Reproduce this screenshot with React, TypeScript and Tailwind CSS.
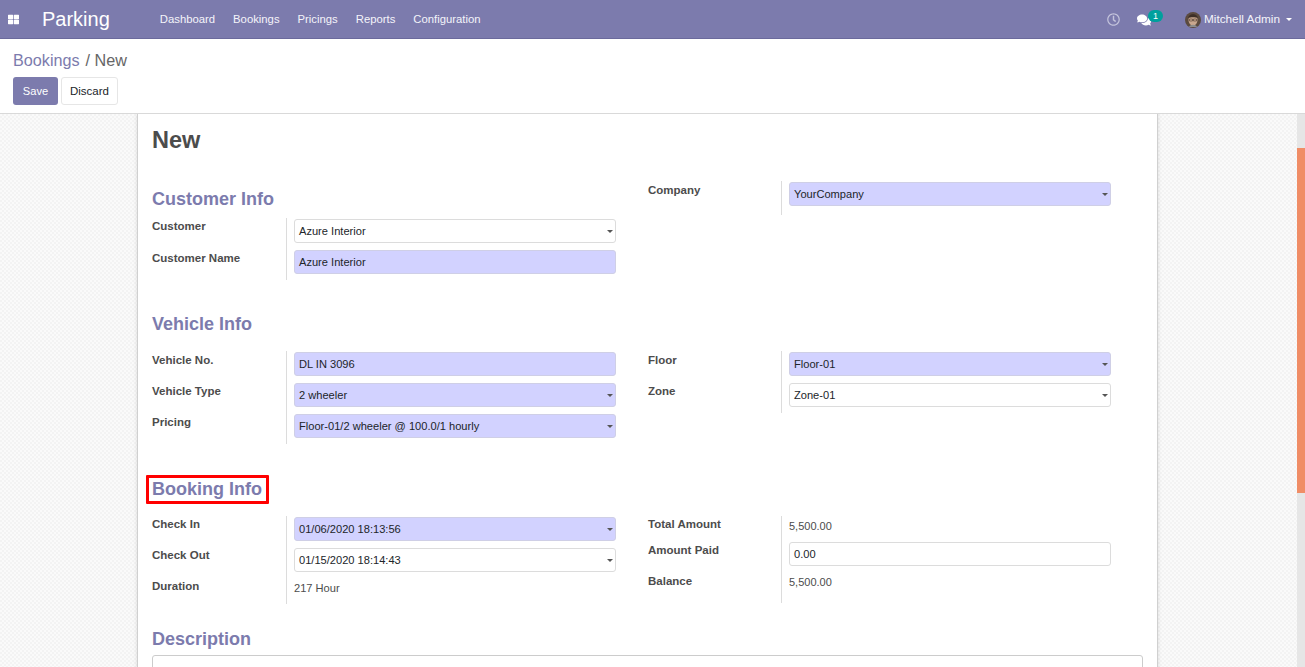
import { FaThLarge, FaRegClock, FaComments } from "react-icons/fa";

const Caret = () => (
  <span className="absolute right-[2px] top-[10px] w-0 h-0 border-x-[3px] border-x-transparent border-t-[3px] border-t-[#555]" />
);

const SelectField = ({ value, required }: { value: string; required?: boolean }) => (
  <div
    className={`relative h-[24px] w-[322px] rounded-[3px] border pl-[4px] leading-[22px] text-[11.1px] text-[#212529] ${
      required ? "bg-[#d2d2ff] border-[#cfcfe6]" : "bg-white border-[#dcdcdc]"
    }`}
  >
    {value}
    <Caret />
  </div>
);

const InputField = ({ value, required }: { value: string; required?: boolean }) => (
  <div
    className={`h-[24px] w-[322px] rounded-[3px] border pl-[4px] leading-[22px] text-[11.1px] text-[#212529] ${
      required ? "bg-[#d2d2ff] border-[#cfcfe6]" : "bg-white border-[#dcdcdc]"
    }`}
  >
    {value}
  </div>
);

const Row = ({
  label,
  children,
  labelTop = "pt-[2px]",
  height = "h-[31px]",
  labelWidth = "w-[134px]",
  valueTop = "pt-[1px]",
}: {
  label: string;
  children: React.ReactNode;
  labelTop?: string;
  height?: string;
  labelWidth?: string;
  valueTop?: string;
}) => (
  <div className={`flex ${height}`}>
    <div className={`${labelWidth} ${labelTop} shrink-0 text-[11.5px] leading-[14px] font-bold text-[#4c4c4c]`}>{label}</div>
    <div className={`border-l border-[#dcdcdc] pl-[7px] ${valueTop}`}>{children}</div>
  </div>
);

const SectionTitle = ({ children }: { children: React.ReactNode }) => (
  <h2 className="text-[18px] leading-[22px] font-bold text-[#7c7bad]">{children}</h2>
);

const navItems = ["Dashboard", "Bookings", "Pricings", "Reports", "Configuration"];

export default function App() {
  return (
    <div className="h-[667px] overflow-hidden flex flex-col bg-white font-['Liberation_Sans',Arial,sans-serif]">
      {/* top navbar */}
      <header className="h-[39px] shrink-0 flex items-center bg-[#7c7bad] border-b border-[#6b6a9c] text-white">
        <FaThLarge className="ml-[8px] text-[11px]" />
        <span className="ml-[23px] text-[20px] leading-none">Parking</span>
        <nav className="ml-[50px] pt-[1px] flex gap-[18px] text-[11.3px]">
          {navItems.map((item) => (
            <span key={item} className="text-[#f4f4fa]">{item}</span>
          ))}
        </nav>
        <div className="ml-auto flex items-center pr-[13px] pt-[1px]">
          <FaRegClock className="text-[13px] text-[#c4c4dc]" />
          <div className="relative ml-[17px] mr-[34px]">
            <FaComments className="text-[14px]" />
            <span className="absolute left-[11px] -top-[3px] h-[12px] w-[15px] rounded-full bg-[#00a09d] text-center text-[9px] leading-[12px]">1</span>
          </div>
          <svg width="16" height="16" viewBox="0 0 16 16" className="mr-[3px]">
            <circle cx="8" cy="8" r="8" fill="#5b4a3e" />
            <ellipse cx="8" cy="8" rx="4.5" ry="5.5" fill="#c9a78e" />
            <path d="M3 6c1-3 3-4 5-4s4 1 5 4c-2-1-8-1-10 0z" fill="#3d2f27" />
            <path d="M4.5 7h3v2h-3zM8.5 7h3v2h-3z" fill="none" stroke="#4a3a30" strokeWidth="0.6" />
            <path d="M4 15c1-3 7-3 8 0z" fill="#8d8d8d" />
          </svg>
          <span className="text-[11.8px] text-[#f4f4fa]">Mitchell Admin</span>
          <span className="ml-[6px] w-0 h-0 border-x-[3px] border-x-transparent border-t-[3px] border-t-white" />
        </div>
      </header>

      {/* control panel */}
      <div className="h-[75px] shrink-0 bg-white border-b border-[#d9d9d9] pl-[13px] pt-[11px]">
        <div className="text-[16.2px] leading-[20px] text-[#666]">
          <span className="text-[#7c7bad]">Bookings</span>
          <span className="ml-[6px]">/ New</span>
        </div>
        <div className="mt-[7px] flex gap-[3px] text-[11.5px]">
          <button className="h-[28px] w-[45px] rounded-[3px] bg-[#7c7bad] pt-[1px] text-[11.1px] text-white">Save</button>
          <button className="h-[28px] w-[57px] rounded-[3px] border border-[#e6e6e6] bg-white pt-[1px] text-[#212529]">Discard</button>
        </div>
      </div>

      {/* content */}
      <div className="flex-1 min-h-0 flex overflow-hidden">
        <main className="flex-1 pl-[137px] overflow-hidden bg-[#f6f6f6] bg-[repeating-conic-gradient(#f3f3f3_0_25%,#fafafa_0_50%)] bg-[length:4px_4px]">
          <div className="w-[1021px] h-[700px] bg-white border-x border-[#d0d0d0] shadow-[0_0_4px_rgba(0,0,0,0.12)] px-[14px]">
            <h1 className="pt-[12px] text-[23.5px] leading-[29px] font-bold text-[#4c4c4c]">New</h1>

            {/* customer */}
            <div className="mt-[26px] flex gap-[32px]">
              <div className="w-[464px]">
                <div className="mt-[7px] mb-[8px]"><SectionTitle>Customer Info</SectionTitle></div>
                <Row label="Customer" labelTop="pt-[1px]"><SelectField value="Azure Interior" /></Row>
                <Row label="Customer Name"><InputField value="Azure Interior" required /></Row>
              </div>
              <div>
                <Row label="Company" labelWidth="w-[133px]" height="h-[34px]"><SelectField value="YourCompany" required /></Row>
              </div>
            </div>

            {/* vehicle */}
            <div className="mt-[33px]"><SectionTitle>Vehicle Info</SectionTitle></div>
            <div className="mt-[16px] flex gap-[32px]">
              <div className="w-[464px]">
                <Row label="Vehicle No."><InputField value="DL IN 3096" required /></Row>
                <Row label="Vehicle Type"><SelectField value="2 wheeler" required /></Row>
                <Row label="Pricing"><SelectField value="Floor-01/2 wheeler @ 100.0/1 hourly" required /></Row>
              </div>
              <div>
                <Row label="Floor" labelWidth="w-[133px]"><SelectField value="Floor-01" required /></Row>
                <Row label="Zone" labelWidth="w-[133px]"><SelectField value="Zone-01" /></Row>
              </div>
            </div>

            {/* booking */}
            <div className="mt-[31px] -ml-[6px] w-fit rounded-[1px] border-[3px] border-[#f00] pl-[3px] pr-[4px] pb-[1px]">
              <SectionTitle>Booking Info</SectionTitle>
            </div>
            <div className="mt-[12px] flex gap-[32px]">
              <div className="w-[464px]">
                <Row label="Check In" labelTop="pt-[1px]"><SelectField value="01/06/2020 18:13:56" required /></Row>
                <Row label="Check Out" labelTop="pt-[1px]"><SelectField value="01/15/2020 18:14:43" /></Row>
                <Row label="Duration" labelTop="pt-[1px]" height="h-[26px]">
                  <div className="pt-[2px] text-[11.1px] leading-[14px] text-[#4c4c4c]">217 Hour</div>
                </Row>
              </div>
              <div>
                <Row label="Total Amount" labelTop="pt-[1px]" labelWidth="w-[133px]" height="h-[25px]" valueTop="pt-[3px]">
                  <div className="text-[11px] leading-[14px] text-[#4c4c4c]">5,500.00</div>
                </Row>
                <Row label="Amount Paid" labelWidth="w-[133px]" valueTop="pt-[1px]"><InputField value="0.00" /></Row>
                <Row label="Balance" labelWidth="w-[133px]" valueTop="pt-[3px]">
                  <div className="text-[11px] leading-[14px] text-[#4c4c4c]">5,500.00</div>
                </Row>
              </div>
            </div>

            {/* description */}
            <div className="mt-[24px]"><SectionTitle>Description</SectionTitle></div>
            <div className="mt-[5px] h-[60px] w-[991px] rounded-[3px] border border-[#ccc] bg-white" />
          </div>
        </main>
        <div className="w-[8px] shrink-0 bg-[#e6e6e6] pt-[34px]">
          <div className="h-[345px] bg-[#f08d66]" />
        </div>
      </div>
    </div>
  );
}
